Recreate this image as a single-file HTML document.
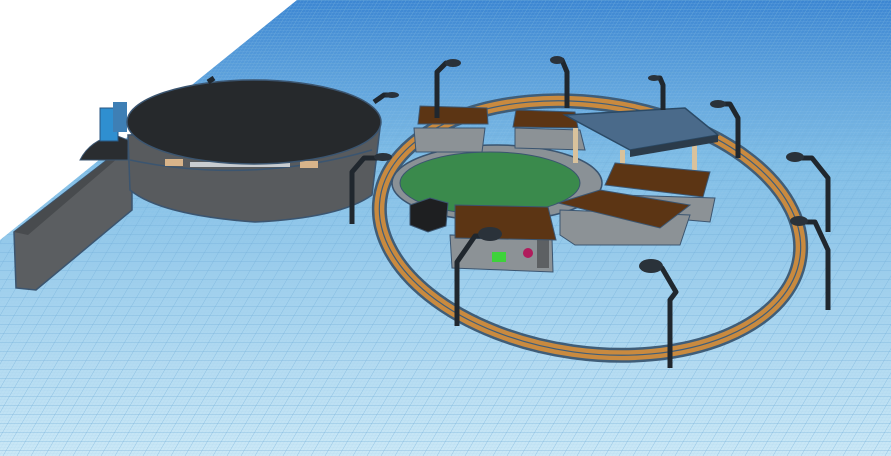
<!DOCTYPE html><html><head><style>html,body{margin:0;padding:0;background:#fff;overflow:hidden}svg{display:block}</style></head><body>
<svg width="891" height="456" viewBox="0 0 891 456" xmlns="http://www.w3.org/2000/svg">
<defs>
<linearGradient id="g" x1="0" y1="0" x2="0" y2="1"><stop offset="0" stop-color="#3c86d2"/><stop offset="0.35" stop-color="#7fbde6"/><stop offset="1" stop-color="#cbe8f6"/></linearGradient>
<pattern id="p" width="14" height="9" patternUnits="userSpaceOnUse" patternTransform="skewX(-30)"><path d="M0 0H14M0 0V9" stroke="#6aa9d6" stroke-width="0.7" fill="none"/></pattern>
<pattern id="pf" width="3.5" height="3" patternUnits="userSpaceOnUse" patternTransform="skewX(-30)"><path d="M0 0H3.5M0 0V3" stroke="#9ccbe9" stroke-width="0.4" fill="none"/></pattern>
</defs>
<polygon points="297,0 891,0 891,456 0,456 0,240" fill="url(#g)"/>
<polygon points="297,0 891,0 891,456 0,456 0,240" fill="url(#pf)" opacity="0.6"/>
<polygon points="297,0 891,0 891,456 0,456 0,240" fill="url(#p)" opacity="0.8"/>
<!-- wall -->
<polygon points="14,232 120,150 132,152 132,210 36,290 16,288" fill="#5b5e61" stroke="#3b5570" stroke-width="1.5"/>
<polygon points="14,232 120,150 125,152 28,235" fill="#484b4e"/>
<path d="M80,160 Q90,140 115,135 L128,140 L128,160 Z" fill="#2a2d30" stroke="#3b5570"/>
<rect x="100" y="108" width="18" height="33" fill="#2f8fd0" stroke="#2a5680"/>
<rect x="113" y="102" width="14" height="30" fill="#3e7fb5"/>
<!-- dome building -->
<path d="M128,135 L130,190 Q160,215 255,222 Q340,218 372,195 L380,128 Z" fill="#585b5e" stroke="#3b5570" stroke-width="1.5"/>
<path d="M130,160 Q250,185 372,150" stroke="#3b5570" fill="none" stroke-width="1.5"/>
<rect x="165" y="159" width="18" height="7" fill="#d8b48a"/><rect x="300" y="161" width="18" height="7" fill="#d8b48a"/>
<rect x="190" y="162" width="100" height="5" fill="#c8ccd0"/>
<ellipse cx="254" cy="122" rx="127" ry="42" fill="#26292c" stroke="#3b5570" stroke-width="1.5"/>
<!-- outer ring -->
<ellipse cx="590" cy="228" rx="212" ry="125" transform="rotate(8 590 228)" fill="none" stroke="#3f5d78" stroke-width="15"/>
<ellipse cx="590" cy="228" rx="212" ry="125" transform="rotate(8 590 228)" fill="none" stroke="#c98a3f" stroke-width="10"/>
<ellipse cx="590" cy="228" rx="212" ry="125" transform="rotate(8 590 228)" fill="none" stroke="#3f5d78" stroke-width="1.2"/>
<!-- field -->
<ellipse cx="497" cy="183" rx="105" ry="38" fill="#8a9196" stroke="#3b5570" stroke-width="1.5"/>
<ellipse cx="490" cy="183" rx="90" ry="31" fill="#3a8a4c" stroke="#3b5570"/>
<!-- back sheds -->
<polygon points="414,128 485,128 482,152 416,152" fill="#8c9296" stroke="#3b5570"/>
<polygon points="420,106 487,108 488,124 418,124" fill="#5c3514" stroke="#3b5570"/>
<polygon points="515,128 580,130 585,150 515,148" fill="#8c9296" stroke="#3b5570"/>
<polygon points="516,110 575,112 578,128 513,127" fill="#5c3514" stroke="#3b5570"/>
<!-- grey pavilion -->
<rect x="573" y="128" width="5" height="35" fill="#d9c29c"/><rect x="620" y="150" width="5" height="28" fill="#d9c29c"/><rect x="692" y="140" width="5" height="30" fill="#d9c29c"/>
<polygon points="565,115 685,108 718,135 630,150" fill="#4a6a8a" stroke="#2b4a66" stroke-width="1.5"/>
<polygon points="630,150 718,135 718,142 630,157" fill="#2b3b4a"/>
<!-- right sheds -->
<polygon points="620,195 715,198 710,222 630,215" fill="#8c9296" stroke="#3b5570"/>
<polygon points="615,163 710,172 703,197 605,185" fill="#5c3514" stroke="#3b5570"/>
<polygon points="560,210 690,215 680,245 575,245 560,235" fill="#8c9296" stroke="#3b5570"/>
<polygon points="600,190 690,205 660,228 558,203" fill="#5c3514" stroke="#3b5570"/>
<!-- black cube -->
<polygon points="410,205 430,198 448,203 446,226 428,232 410,225" fill="#1e1f21" stroke="#3b5570"/>
<!-- front shed -->
<polygon points="450,235 552,238 553,272 452,268" fill="#8c9296" stroke="#3b5570"/>
<rect x="492" y="252" width="14" height="10" fill="#3ed23a"/><circle cx="528" cy="253" r="5" fill="#b01c5c"/>
<rect x="537" y="238" width="12" height="30" fill="#5d6063"/>
<polygon points="455,205 548,207 556,240 455,238" fill="#5c3514" stroke="#3b5570"/>
<!-- lamps -->
<g fill="none" stroke="#20272e" stroke-width="5" stroke-linejoin="round">
<path d="M437,118 V72 L446,63 H456"/>
<path d="M567,108 V72 L562,60 H556"/>
<path d="M663,110 V85 L660,78 H652"/>
<path d="M738,158 V118 L730,104 H716"/>
<path d="M828,232 V178 L812,158 H792"/>
<path d="M828,310 V250 L815,222 H796"/>
<path d="M352,224 V172 L364,158 H384"/>
<path d="M374,102 L384,95 H396"/>
<path d="M457,326 V262 L475,236 H492"/>
<path d="M670,368 V300 L676,292 L662,268 H648"/>
<path d="M208,82 L214,78"/>
</g>
<g fill="#2a323a">
<ellipse cx="453" cy="63" rx="8" ry="4"/><ellipse cx="557" cy="60" rx="7" ry="4"/><ellipse cx="654" cy="78" rx="6" ry="3"/>
<ellipse cx="718" cy="104" rx="8" ry="4"/><ellipse cx="795" cy="157" rx="9" ry="5"/><ellipse cx="799" cy="221" rx="9" ry="5"/>
<ellipse cx="383" cy="157" rx="9" ry="4"/><ellipse cx="392" cy="95" rx="7" ry="3"/><ellipse cx="490" cy="234" rx="12" ry="7"/><ellipse cx="651" cy="266" rx="12" ry="7"/>
</g>
</svg>
</body></html>
